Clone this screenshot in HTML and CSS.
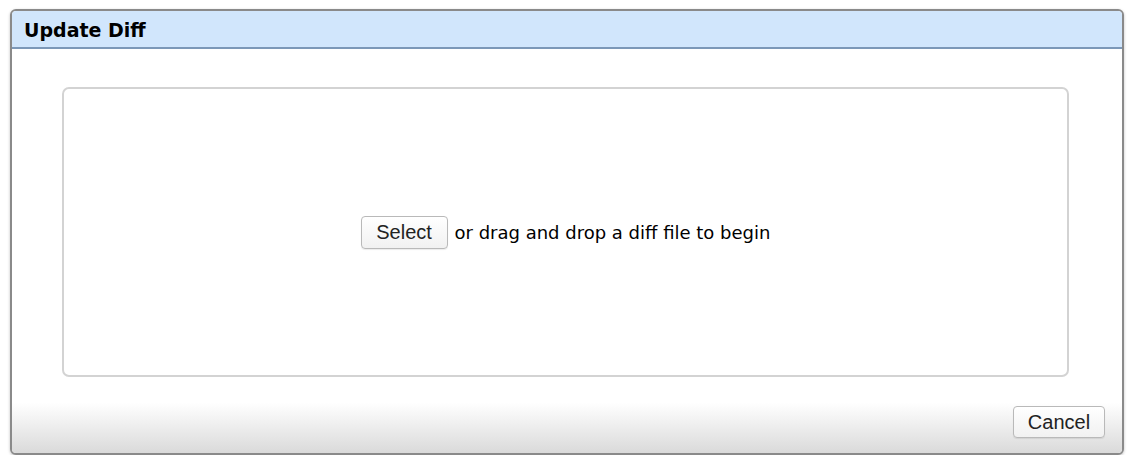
FILE: index.html
```html
<!DOCTYPE html>
<html>
<head>
<meta charset="utf-8">
<link rel="stylesheet" href="styles.css">
</head>
<body>
<div class="dialog">
  <div class="header">Update Diff</div>
  <div class="content">
    <div class="dropzone">
      <button class="btn select">Select</button>
      <span class="hint">or drag and drop a diff file to begin</span>
    </div>
  </div>
  <div class="footer">
    <button class="btn cancel">Cancel</button>
  </div>
</div>
</body>
</html>
```
FILE: styles.css
```css
html, body { margin: 0; padding: 0; background: #fff; }
body { padding: 9px 0 0 10px; }
.dialog {
  width: 1110px;
  height: 442px;
  border: 2px solid #8a8a8a;
  border-radius: 6px;
  box-shadow: 0 1px 3px rgba(0,0,0,0.25);
  display: flex;
  flex-direction: column;
  overflow: hidden;
  background: #fff;
}
.header {
  height: 38px;
  box-sizing: border-box;
  padding: 2px 0 0 12px;
  background: #d1e6fc;
  border-bottom: 2px solid #7c98b8;
  font-family: "DejaVu Sans", Verdana, sans-serif;
  font-weight: bold;
  font-size: 19px;
  color: #000;
  display: flex;
  align-items: center;
}
.content {
  padding: 38px 53px 0 50px;
}
.dropzone {
  height: 286px;
  border: 2px solid #d3d3d3;
  border-radius: 7px;
  display: flex;
  align-items: center;
  justify-content: center;
  gap: 7px;
}
.btn {
  font-family: "Liberation Sans", Helvetica, Arial, sans-serif;
  font-size: 20px;
  color: #222;
  background: linear-gradient(#ffffff, #f1f1f1);
  border: 1px solid #b9b9b9;
  border-radius: 4px;
  padding: 0;
  box-shadow: 0 1px 1px rgba(0,0,0,0.08);
}
.select { width: 87px; height: 33px; }
.hint {
  font-family: "DejaVu Sans", Verdana, sans-serif;
  font-size: 18px;
  color: #000;
}
.footer {
  margin-top: auto;
  height: 63px;
  background: linear-gradient(#ffffff 20%, #dadada);
  display: flex;
  justify-content: flex-end;
  align-items: flex-start;
  padding: 16px 17px 0 0;
  box-sizing: border-box;
}
.cancel { width: 92px; height: 32px; }
```
